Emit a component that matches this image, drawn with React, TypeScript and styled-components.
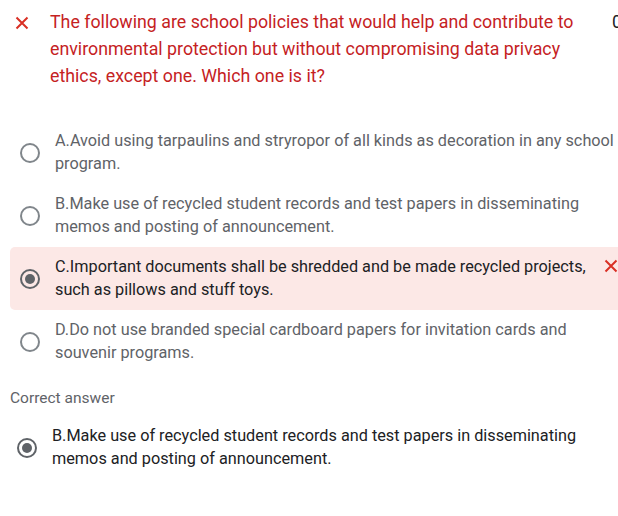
import React from "react";
import styled, { createGlobalStyle } from "styled-components";

const Global = createGlobalStyle`
  html, body { margin: 0; padding: 0; background: #fff; overflow: hidden; }
  body { font-family: Roboto, "Liberation Sans", Arial, sans-serif; }
`;

const Page = styled.div`
  width: 618px;
  height: 516px;
  overflow: hidden;
  display: flex;
  flex-direction: column;
`;

const Header = styled.div`
  display: flex;
  align-items: flex-start;
  padding: 8px 0 0 15px;
  white-space: nowrap;
`;

const WrongMark = styled.span`
  flex: none;
  display: inline-flex;
  align-items: center;
  justify-content: center;
  width: 14px;
  height: 29px;
  color: #d93025;
`;

const Title = styled.div`
  flex: none;
  width: 540px;
  margin-left: 21px;
  white-space: normal;
  font-size: 17.8px;
  line-height: 27px;
  color: #c5221f;
`;

const Points = styled.div`
  flex: none;
  margin-left: 22px;
  font-size: 17.8px;
  line-height: 27px;
  color: #202124;
`;

const Options = styled.div`
  display: flex;
  flex-direction: column;
  margin-top: 32px;
`;

const OptionRow = styled.div<{ $wrong?: boolean; $indent?: number }>`
  display: flex;
  align-items: center;
  margin-left: ${(p) => p.$indent ?? 10}px;
  padding: 9px 0 9px 10px;
  border-radius: 5px 0 0 5px;
  background: ${(p) => (p.$wrong ? "#fce8e6" : "transparent")};
`;

const Radio = styled.span<{ $checked?: boolean }>`
  flex: none;
  box-sizing: border-box;
  width: 20px;
  height: 20px;
  border-radius: 50%;
  border: 2px solid ${(p) => (p.$checked ? "#5f6368" : "#80868b")};
  display: flex;
  align-items: center;
  justify-content: center;
  &::after {
    content: "";
    display: ${(p) => (p.$checked ? "block" : "none")};
    width: 10px;
    height: 10px;
    border-radius: 50%;
    background: #5f6368;
  }
`;

const OptionText = styled.div<{ $dark?: boolean }>`
  flex: 1;
  margin-left: 15px;
  font-size: 16.25px;
  line-height: 22.5px;
  color: ${(p) => (p.$dark ? "#202124" : "#5f6368")};
  white-space: nowrap;
`;

const RowMark = styled.span`
  flex: none;
  align-self: flex-start;
  margin-top: 3px;
  display: inline-flex;
  color: #d93025;
`;

const Label = styled.div`
  margin: 14px 0 0 10px;
  font-size: 15.5px;
  line-height: 22px;
  color: #5f6368;
`;

const AnswerRow = styled(OptionRow)`
  margin-top: 7px;
`;

const XIcon = ({ size }: { size: number }) => (
  <svg width={size} height={size} viewBox="0 0 14 14">
    <path d="M1.5 1.5 L12.5 12.5 M12.5 1.5 L1.5 12.5" stroke="currentColor" strokeWidth="2" fill="none" />
  </svg>
);

const options = [
  { text: ["A.Avoid using tarpaulins and stryropor of all kinds as decoration in any school", "program."] },
  { text: ["B.Make use of recycled student records and test papers in disseminating", "memos and posting of announcement."] },
  { text: ["C.Important documents shall be shredded and be made recycled projects,", "such as pillows and stuff toys."], wrong: true },
  { text: ["D.Do not use branded special cardboard papers for invitation cards and", "souvenir programs."] },
];

export default function App() {
  return (
    <Page>
      <Global />
      <Header>
        <WrongMark>
          <XIcon size={14} />
        </WrongMark>
        <Title>
          The following are school policies that would help and contribute to environmental protection but without
          compromising data privacy ethics, except one. Which one is it?
        </Title>
        <Points>0/1</Points>
      </Header>
      <Options>
        {options.map((o, i) => (
          <OptionRow key={i} $wrong={o.wrong}>
            <Radio $checked={o.wrong} />
            <OptionText $dark={o.wrong}>
              {o.text[0]}
              <br />
              {o.text[1]}
            </OptionText>
            {o.wrong && (
              <RowMark>
                <XIcon size={14} />
              </RowMark>
            )}
          </OptionRow>
        ))}
      </Options>
      <Label>Correct answer</Label>
      <AnswerRow $indent={7}>
        <Radio $checked />
        <OptionText $dark>
          B.Make use of recycled student records and test papers in disseminating
          <br />
          memos and posting of announcement.
        </OptionText>
      </AnswerRow>
    </Page>
  );
}
